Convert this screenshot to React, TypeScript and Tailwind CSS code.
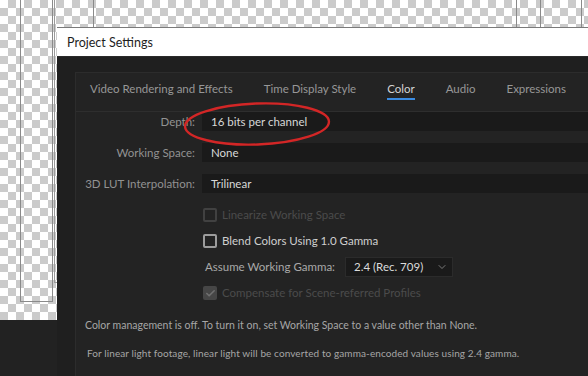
import { Check, ChevronDown } from 'lucide-react'

const tabs = ['Video Rendering and Effects', 'Time Display Style', 'Color', 'Audio', 'Expressions']

function Box({ state }: { state: 'on' | 'off' | 'disabled' | 'checked-disabled' }) {
  if (state === 'checked-disabled') {
    return (
      <div className="flex h-[14px] w-[14px] items-center justify-center rounded-[2px] bg-[#464646]">
        <Check className="h-[11px] w-[11px] text-[#6f6f6f]" strokeWidth={3.5} />
      </div>
    )
  }
  return (
    <div
      className={
        state === 'disabled'
          ? 'h-[14px] w-[14px] rounded-[2px] border-2 border-[#414141]'
          : 'h-[14px] w-[14px] rounded-[2px] border-2 border-[#9c9c9c]'
      }
    />
  )
}

function Field({ label, value }: { label: string; value: string }) {
  return (
    <div className="grid h-[19px] grid-cols-[126px_1fr] items-center">
      <span className="pr-[7px] text-right text-[#929292]">{label}</span>
      <div className="flex h-full items-center bg-[#1a1a1a] pl-[9px] text-[#d8d8d8]">{value}</div>
    </div>
  )
}

export default function App() {
  return (
    <div className="relative flex h-[376px] w-[588px] flex-col overflow-hidden bg-[repeating-conic-gradient(#cbcbcb_0_25%,#ffffff_0_50%)] bg-[length:16px_16px] font-[family-name:Lato,sans-serif] text-[11.5px]">
      {/* thumbnail frames on the canvas */}
      <div className="absolute left-[20px] top-0 h-[302px] w-[33px] border-b border-l border-r border-[#8a8a8a]" />
      <div className="absolute left-[54px] top-0 h-[283px] w-[10px] border-b border-l border-[#9a9a9a]" />
      <div className="absolute left-[93px] top-0 h-[27px] w-px bg-[#8a8a8a]" />
      <div className="absolute left-[516px] top-0 h-[27px] w-px bg-[#8a8a8a]" />
      <div className="absolute left-[540px] top-0 h-[27px] w-px bg-[#8a8a8a]" />
      <div className="absolute left-[581px] top-0 h-[27px] w-px bg-[#8a8a8a]" />

      <div className="h-[27px] shrink-0" />
      <div className="relative flex flex-1">
        <div className="flex w-[57px] flex-col">
          <div className="h-[293px]" />
          <div className="flex-1 bg-[#222222]" />
        </div>

        <div className="flex flex-1 flex-col border-t border-[#7a7a7a]">
          <div className="flex h-[29px] items-center border-b border-[#2a2a2a] bg-white pl-[10px] pt-[2px] text-[12.5px] text-[#1e1e1e]">
            Project Settings
          </div>
          <div className="flex flex-1 flex-col bg-[#1f1f1f] pl-[18px] pt-[15px]">
            <div className="flex flex-1 flex-col border-l border-t border-[#2c2c2c] bg-[#232323]">
              <div className="flex h-[39px] gap-[31px] border-b border-[#2e2e2e] pl-[14px] pt-[8px]">
                {tabs.map((t) => (
                  <div key={t} className="flex flex-col">
                    <span className={t === 'Color' ? 'leading-[16px] text-[#d4d4d4]' : 'leading-[16px] text-[#979797]'}>{t}</span>
                    <div className={t === 'Color' ? 'mt-[1px] h-[2px] bg-[#3b8be0]' : 'mt-[1px] h-[2px]'} />
                  </div>
                ))}
              </div>

              <div className="flex flex-col gap-[12px]">
                <Field label="Depth:" value="16 bits per channel" />
                <Field label="Working Space:" value="None" />
                <Field label="3D LUT Interpolation:" value="Trilinear" />
              </div>

              <div className="mt-[12px] flex flex-col gap-[6px] pl-[127px]">
                <div className="flex h-[20px] items-center gap-[5px] text-[#4b4b4b]">
                  <Box state="disabled" />
                  Linearize Working Space
                </div>
                <div className="flex h-[20px] items-center gap-[5px] text-[#cfcfcf]">
                  <Box state="off" />
                  Blend Colors Using 1.0 Gamma
                </div>
                <div className="flex h-[20px] items-center pl-[2px]">
                  <span className="w-[140px] text-[#a9a9a9]">Assume Working Gamma:</span>
                  <div className="flex h-[20px] w-[108px] items-center justify-between border border-[#2b2b2b] bg-[#1a1a1a] pl-[8px] pr-[4px] text-[#dcdcdc]">
                    2.4 (Rec. 709)
                    <ChevronDown className="h-[12px] w-[12px] text-[#9a9a9a]" strokeWidth={1.5} />
                  </div>
                </div>
                <div className="flex h-[20px] items-center gap-[5px] text-[#4b4b4b]">
                  <Box state="checked-disabled" />
                  Compensate for Scene-referred Profiles
                </div>
              </div>

              <p className="mt-[14px] pl-[9px] text-[10.5px] leading-[16px] text-[#a6a6a6]">
                Color management is off. To turn it on, set Working Space to a value other than None.
              </p>
              <p className="mt-[12px] pl-[11px] text-[10px] leading-[16px] tracking-[0.1px] text-[#a6a6a6]">
                For linear light footage, linear light will be converted to gamma-encoded values using 2.4 gamma.
              </p>
            </div>
          </div>
        </div>
      </div>

      {/* red annotation ellipse */}
      <svg className="absolute left-[180px] top-[100px]" width="154" height="50" viewBox="0 0 154 50">
        <ellipse cx="77" cy="24" rx="72" ry="20.5" fill="none" stroke="#d32626" strokeWidth="2.4" transform="rotate(-2 77 24)" />
      </svg>
    </div>
  )
}
